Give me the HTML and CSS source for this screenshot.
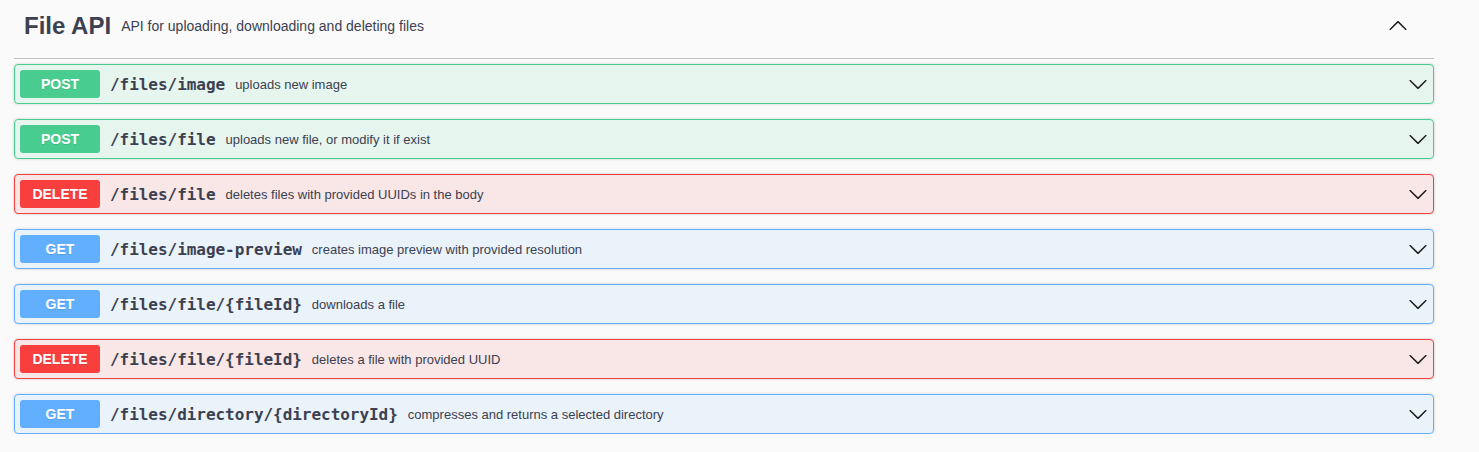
FILE: index.html
```html
<!DOCTYPE html>
<html lang="en">
<head>
<meta charset="utf-8">
<title>File API</title>
<link rel="stylesheet" href="styles.css">
</head>
<body>
<div class="wrapper">
  <div class="tag-section">
    <h3 class="tag-header">
      <span class="tag-title">File API</span>
      <small class="tag-desc">API for uploading, downloading and deleting files</small>
      <button class="expand-btn" aria-label="Collapse">
        <svg class="arrow" width="20" height="20" viewBox="0 0 20 20"><path d="M17.418 13.891c.272.268.709.268.979 0s.271-.701 0-.969l-7.908-7.830c-.27-.268-.707-.268-.979 0l-7.908 7.830c-.27.268-.27.701 0 .969.271.268.709.268.979 0L10 6.750l7.418 7.141z"/></svg>
      </button>
    </h3>
    <div class="ops">
      <div class="opblock post"><span class="method">POST</span><span class="path">/files/image</span><span class="summary">uploads new image</span><svg class="arrow" width="20" height="20" viewBox="0 0 20 20"><path d="M17.418 6.109c.272-.268.709-.268.979 0s.271.701 0 .969l-7.908 7.83c-.27.268-.707.268-.979 0l-7.908-7.83c-.27-.268-.27-.701 0-.969.271-.268.709-.268.979 0L10 13.25l7.418-7.141z"/></svg></div>
      <div class="opblock post"><span class="method">POST</span><span class="path">/files/file</span><span class="summary">uploads new file, or modify it if exist</span><svg class="arrow" width="20" height="20" viewBox="0 0 20 20"><path d="M17.418 6.109c.272-.268.709-.268.979 0s.271.701 0 .969l-7.908 7.83c-.27.268-.707.268-.979 0l-7.908-7.83c-.27-.268-.27-.701 0-.969.271-.268.709-.268.979 0L10 13.25l7.418-7.141z"/></svg></div>
      <div class="opblock delete"><span class="method">DELETE</span><span class="path">/files/file</span><span class="summary">deletes files with provided UUIDs in the body</span><svg class="arrow" width="20" height="20" viewBox="0 0 20 20"><path d="M17.418 6.109c.272-.268.709-.268.979 0s.271.701 0 .969l-7.908 7.83c-.27.268-.707.268-.979 0l-7.908-7.83c-.27-.268-.27-.701 0-.969.271-.268.709-.268.979 0L10 13.25l7.418-7.141z"/></svg></div>
      <div class="opblock get"><span class="method">GET</span><span class="path">/files/image-preview</span><span class="summary">creates image preview with provided resolution</span><svg class="arrow" width="20" height="20" viewBox="0 0 20 20"><path d="M17.418 6.109c.272-.268.709-.268.979 0s.271.701 0 .969l-7.908 7.83c-.27.268-.707.268-.979 0l-7.908-7.83c-.27-.268-.27-.701 0-.969.271-.268.709-.268.979 0L10 13.25l7.418-7.141z"/></svg></div>
      <div class="opblock get"><span class="method">GET</span><span class="path">/files/file/{fileId}</span><span class="summary">downloads a file</span><svg class="arrow" width="20" height="20" viewBox="0 0 20 20"><path d="M17.418 6.109c.272-.268.709-.268.979 0s.271.701 0 .969l-7.908 7.83c-.27.268-.707.268-.979 0l-7.908-7.83c-.27-.268-.27-.701 0-.969.271-.268.709-.268.979 0L10 13.25l7.418-7.141z"/></svg></div>
      <div class="opblock delete"><span class="method">DELETE</span><span class="path">/files/file/{fileId}</span><span class="summary">deletes a file with provided UUID</span><svg class="arrow" width="20" height="20" viewBox="0 0 20 20"><path d="M17.418 6.109c.272-.268.709-.268.979 0s.271.701 0 .969l-7.908 7.83c-.27.268-.707.268-.979 0l-7.908-7.83c-.27-.268-.27-.701 0-.969.271-.268.709-.268.979 0L10 13.25l7.418-7.141z"/></svg></div>
      <div class="opblock get"><span class="method">GET</span><span class="path">/files/directory/{directoryId}</span><span class="summary">compresses and returns a selected directory</span><svg class="arrow" width="20" height="20" viewBox="0 0 20 20"><path d="M17.418 6.109c.272-.268.709-.268.979 0s.271.701 0 .969l-7.908 7.83c-.27.268-.707.268-.979 0l-7.908-7.83c-.27-.268-.27-.701 0-.969.271-.268.709-.268.979 0L10 13.25l7.418-7.141z"/></svg></div>
    </div>
  </div>
</div>
</body>
</html>
```
FILE: styles.css
```css
html, body {
  margin: 0;
  padding: 0;
  background: #fafafa;
}
body {
  font-family: "Liberation Sans", Arial, sans-serif;
  color: #3b4151;
}
.wrapper {
  padding: 0 0 0 14px;
}
.tag-section {
  width: 1420px;
}
.tag-header {
  display: flex;
  align-items: center;
  margin: 0 0 5px;
  padding: 12px 26px 19px 10px;
  height: 27px;
  border-bottom: 1px solid rgba(59, 65, 81, 0.3);
  font-family: "Liberation Sans", Arial, sans-serif;
  font-size: 24px;
  font-weight: 700;
  line-height: 27px;
  color: #3b4151;
}
.tag-title {
  white-space: nowrap;
}
.tag-desc {
  flex: 1;
  padding: 0 10px;
  font-size: 14px;
  font-weight: 400;
  line-height: 16px;
  color: #3b4151;
}
.expand-btn {
  display: flex;
  align-items: center;
  padding: 0;
  margin: 0 0 0 10px;
  border: none;
  background: none;
  cursor: pointer;
}
.arrow {
  display: block;
  flex: none;
  fill: #1b1b1b;
}
.ops {
  display: flex;
  flex-direction: column;
  gap: 15px;
}
.opblock {
  display: flex;
  align-items: center;
  padding: 5px;
  border: 1px solid;
  border-radius: 4px;
  box-shadow: 0 0 3px rgba(0, 0, 0, 0.19);
}
.opblock.post {
  background: rgba(73, 204, 144, 0.1);
  border-color: #49cc90;
}
.opblock.delete {
  background: rgba(249, 62, 62, 0.1);
  border-color: #f93e3e;
}
.opblock.get {
  background: rgba(97, 175, 254, 0.1);
  border-color: #61affe;
}
.method {
  flex: none;
  min-width: 80px;
  padding: 6px 0;
  border-radius: 3px;
  text-align: center;
  font-family: "Liberation Sans", Arial, sans-serif;
  font-size: 14px;
  font-weight: 700;
  line-height: 16px;
  color: #fff;
  text-shadow: 0 1px 0 rgba(0, 0, 0, 0.1);
}
.post .method { background: #49cc90; }
.delete .method { background: #f93e3e; }
.get .method { background: #61affe; }
.path {
  padding: 2px 10px 0;
  font-family: "DejaVu Sans Mono", monospace;
  font-size: 16px;
  font-weight: 600;
  line-height: 20px;
  letter-spacing: -0.04px;
  color: #3b4151;
  white-space: nowrap;
}
.summary {
  flex: 1;
  padding-top: 2px;
  font-family: "Liberation Sans", Arial, sans-serif;
  font-size: 13px;
  line-height: 16px;
  color: #3b4151;
}
```
